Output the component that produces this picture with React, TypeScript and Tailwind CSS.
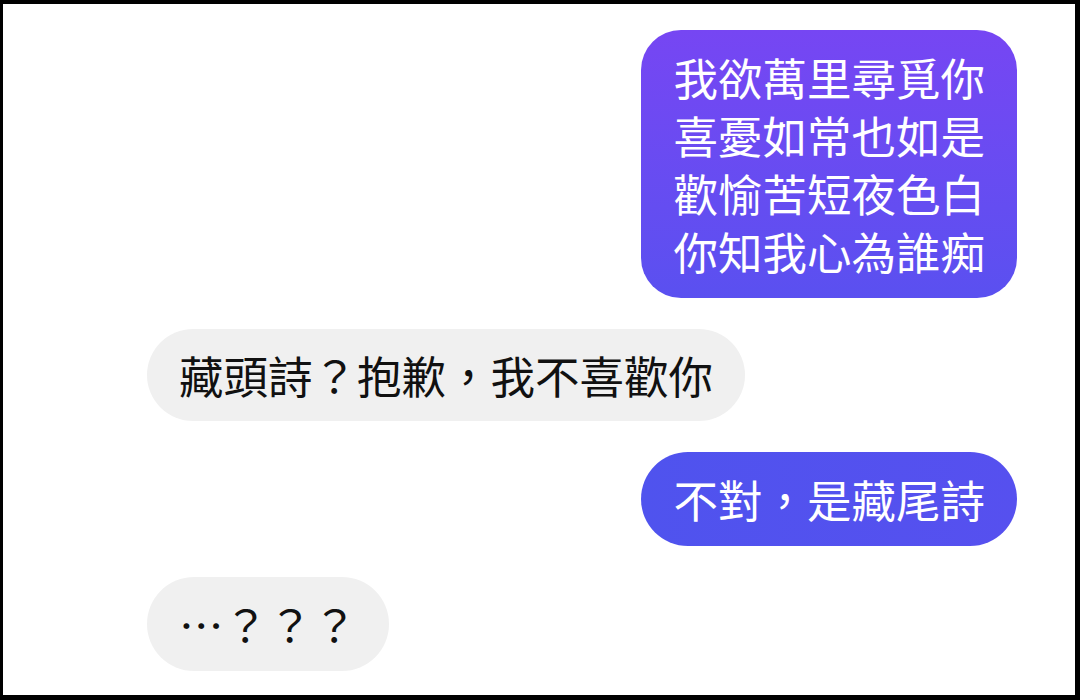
import React from "react";

const font = {
  fontFamily: '"Noto Sans CJK TC", "Noto Sans CJK SC", "Noto Sans", sans-serif',
};

export default function App() {
  return (
    <div className="w-[1080px] h-[700px] bg-black pt-[4px] pl-[3px] pr-[5px] pb-[5px]">
      <div
        lang="zh-Hant"
        style={font}
        className="w-full h-full bg-white flex flex-col gap-[31px] pt-[26px] pl-[144px] pr-[58px] text-[44.5px] leading-[58px]"
      >
        <div className="self-end rounded-[40px] bg-gradient-to-b from-[#7646f3] to-[#5a50f0] text-white px-[32px] py-[18px]">
          <div>我欲萬里尋覓你</div>
          <div>喜憂如常也如是</div>
          <div>歡愉苦短夜色白</div>
          <div>你知我心為誰痴</div>
        </div>
        <div className="self-start rounded-full bg-[#f0f0f0] text-[#111111] px-[32px] py-[17px]">
          藏頭詩？抱歉，我不喜歡你
        </div>
        <div className="self-end rounded-full bg-gradient-to-r from-[#4f53ee] to-[#5650ef] text-white px-[32px] py-[18px]">
          不對，是藏尾詩
        </div>
        <div className="self-start rounded-full bg-[#f0f0f0] text-[#111111] px-[32px] py-[18px]">
          ⋯？？？
        </div>
      </div>
    </div>
  );
}
